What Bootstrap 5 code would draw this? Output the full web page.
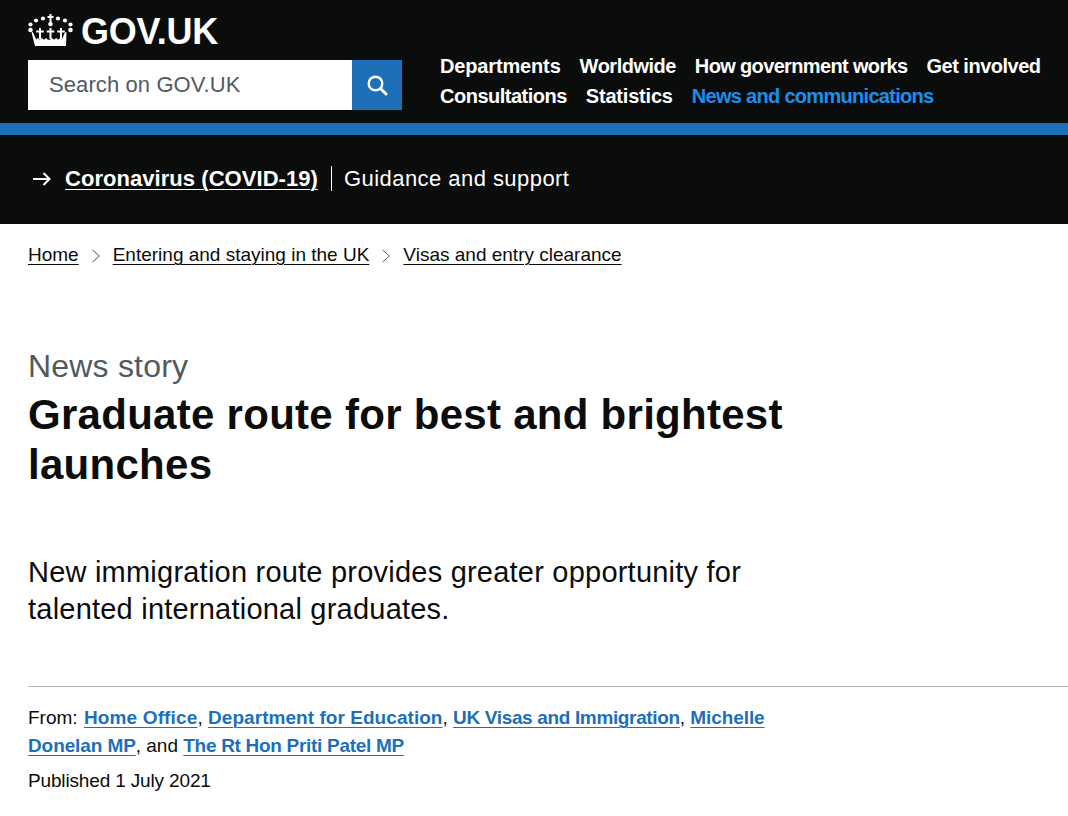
<!DOCTYPE html>
<html lang="en">
<head>
<meta charset="utf-8">
<title>Graduate route for best and brightest launches</title>
<link href="https://cdn.jsdelivr.net/npm/bootstrap@5.3.0/dist/css/bootstrap.min.css" rel="stylesheet">
<style>
html,body{height:816px;overflow:hidden}
body{font-family:"Liberation Sans",Arial,sans-serif;color:#0b0c0c;background:#fff;font-size:19px}
.gov-head{background:#0b0c0c;height:123px;padding-left:28px}
.gov-left{width:374px;flex:none}
.gov-logo{height:60px;gap:8px;color:#fff;font-weight:700;font-size:36px;line-height:60px;letter-spacing:-.3px;text-decoration:none}
.gov-logo span{padding-top:3px}
.gov-search{height:50px}
.gov-input{flex:1;background:#fff;color:#505a5f;font-size:22px;line-height:50px;padding-left:21px;letter-spacing:.1px}
.gov-btn{width:50px;background:#1d70b8;border:0;padding:0}
.gov-nav{flex:1;margin:0 0 0 38px;padding:51px 0 0;list-style:none;flex-wrap:wrap;align-content:flex-start;column-gap:19px;font-size:20px;line-height:30px;font-weight:700;letter-spacing:-.5px}
.gov-nav a{color:#fff;text-decoration:none}
.gov-nav a.on{color:#1d8feb;letter-spacing:-.7px}
.gov-nav li:nth-child(1){letter-spacing:-.15px}
.gov-nav li:nth-child(3){letter-spacing:-.65px}
.gov-nav li:nth-child(6){letter-spacing:-.2px}
.gov-band{height:12px;background:#1d70b8}
.gov-covid{background:#0b0c0c;height:89px;padding:0 28px 2px 33px;color:#fff;font-size:22px}
.gov-covid svg{margin-right:14px}
.gov-covid a{color:#fff;font-weight:700;text-decoration:underline;text-underline-offset:3px;text-decoration-thickness:1px;letter-spacing:.05px}
.gov-sep{border-left:1px solid #fff;padding-left:12px;margin-left:13px;line-height:25px;letter-spacing:.45px}
.gov-crumbs{margin:0;padding:18px 28px 0;list-style:none;font-size:19px;line-height:25px;height:122px}
.gov-crumbs a{color:#0b0c0c;text-decoration:underline;text-underline-offset:3px;text-decoration-thickness:1px}
.gov-crumbs svg{margin:0 11px 0 12px}
.gov-main{padding:0 28px}
.gov-kicker{font-size:32px;line-height:40px;color:#505a5f;margin:0 0 4px;letter-spacing:.2px}
.gov-title{font-size:42px;line-height:50px;font-weight:700;margin:0;width:780px;letter-spacing:.28px}
.gov-lead{font-size:29px;line-height:37px;margin:64px 0 0;width:780px;letter-spacing:.22px}
.gov-meta{margin:58px -28px 0 0;border-top:1px solid #b1b4b6;padding-top:17px;font-size:19px;line-height:28px}
.gov-from{width:760px;margin:0}
.gov-from a{color:#1d70b8;font-weight:700;text-decoration:underline;text-underline-offset:3px;text-decoration-thickness:1px;letter-spacing:-.1px}
.gov-from a:nth-of-type(1){margin-left:1px;letter-spacing:.15px}
.gov-from a:nth-of-type(2){letter-spacing:.05px}
.gov-from a:nth-of-type(3){letter-spacing:-.35px}
.gov-from a:nth-of-type(5){letter-spacing:-.3px}
.gov-pub{margin:7px 0 0;letter-spacing:-.15px}
</style>
</head>
<body>
<header class="gov-head d-flex">
  <div class="gov-left">
    <a class="gov-logo d-flex align-items-center" href="#">
      <svg width="45" height="33" viewBox="0 0 45 33" fill="#fff" aria-hidden="true">
        <circle cx="2.500" cy="10.500" r="2.100"/><circle cx="8" cy="6.500" r="2.100"/><circle cx="15" cy="4.500" r="2.100"/><circle cx="30" cy="4.500" r="2.100"/><circle cx="37" cy="6.500" r="2.100"/><circle cx="42.500" cy="10.500" r="2.100"/>
        <circle cx="2.500" cy="16" r="2.300"/><circle cx="42.500" cy="16" r="2.300"/>
        <path d="M21.500 0h2v2h2v2h-2v4a2.300 2.300 0 1 1-2 0V4h-2V2h2z"/>
        <path d="M21.500 14h2v2.500h2.800v2h-2.800V25h-2v-6.500h-2.800v-2h2.800z"/>
        <path d="M11 14h2v2.500h2.800v2H13V25h-2v-6.500H8.200v-2H11z"/>
        <path d="M32 14h2v2.500h2.800v2H34V25h-2v-6.500h-2.800v-2H32z"/>
        <path d="M3.500 18.500l1.300-.5 3.400 7.500 1.800-1.500 1.800 1.800 2-1.800 2.200 1.800 2-1.800 2 1.800h2l2-1.800 2 1.800 2.200-1.800 2 1.800 1.800-1.800 1.800 1.500 3.400-7.500 1.300.5L38 32H7z"/>
      </svg>
      <span>GOV.UK</span>
    </a>
    <form class="gov-search d-flex" role="search">
      <div class="gov-input">Search on GOV.UK</div>
      <button class="gov-btn d-flex align-items-center justify-content-center" type="button" aria-label="Search">
        <svg width="22" height="22" viewBox="0 0 22 22" fill="none" stroke="#fff" aria-hidden="true"><circle cx="9.500" cy="9.500" r="6.800" stroke-width="2.400"/><path d="M14.500 14.500l5.500 5.500" stroke-width="3" stroke-linecap="round"/></svg>
      </button>
    </form>
  </div>
  <ul class="gov-nav d-flex">
    <li><a href="#">Departments</a></li>
    <li><a href="#">Worldwide</a></li>
    <li><a href="#">How government works</a></li>
    <li><a href="#">Get involved</a></li>
    <li><a href="#">Consultations</a></li>
    <li><a href="#">Statistics</a></li>
    <li><a class="on" href="#">News and communications</a></li>
  </ul>
</header>
<div class="gov-band"></div>
<section class="gov-covid d-flex align-items-center">
  <svg width="18" height="14" viewBox="0 0 18 14" fill="none" stroke="#fff" stroke-width="2" aria-hidden="true"><path d="M0 7h16.500M10.500 1l6 6-6 6"/></svg>
  <a href="#">Coronavirus (COVID-19)</a>
  <span class="gov-sep">Guidance and support</span>
</section>
<ol class="gov-crumbs d-flex align-items-start">
  <li><a href="#">Home</a><svg width="11" height="16" viewBox="0 0 11 16" fill="none" stroke="#505a5f" aria-hidden="true"><path d="M1.500 2l7 6-7 6"/></svg></li>
  <li><a href="#">Entering and staying in the UK</a><svg width="11" height="16" viewBox="0 0 11 16" fill="none" stroke="#505a5f" aria-hidden="true"><path d="M1.500 2l7 6-7 6"/></svg></li>
  <li><a href="#">Visas and entry clearance</a></li>
</ol>
<main class="gov-main">
  <p class="gov-kicker">News story</p>
  <h1 class="gov-title">Graduate route for best and brightest launches</h1>
  <p class="gov-lead">New immigration route provides greater opportunity for talented international graduates.</p>
  <div class="gov-meta">
    <p class="gov-from">From: <a href="#">Home Office</a>, <a href="#">Department for Education</a>, <a href="#">UK Visas and Immigration</a>, <a href="#">Michelle Donelan MP</a>, and <a href="#">The Rt Hon Priti Patel MP</a></p>
    <p class="gov-pub">Published 1 July 2021</p>
  </div>
</main>
</body>
</html>
